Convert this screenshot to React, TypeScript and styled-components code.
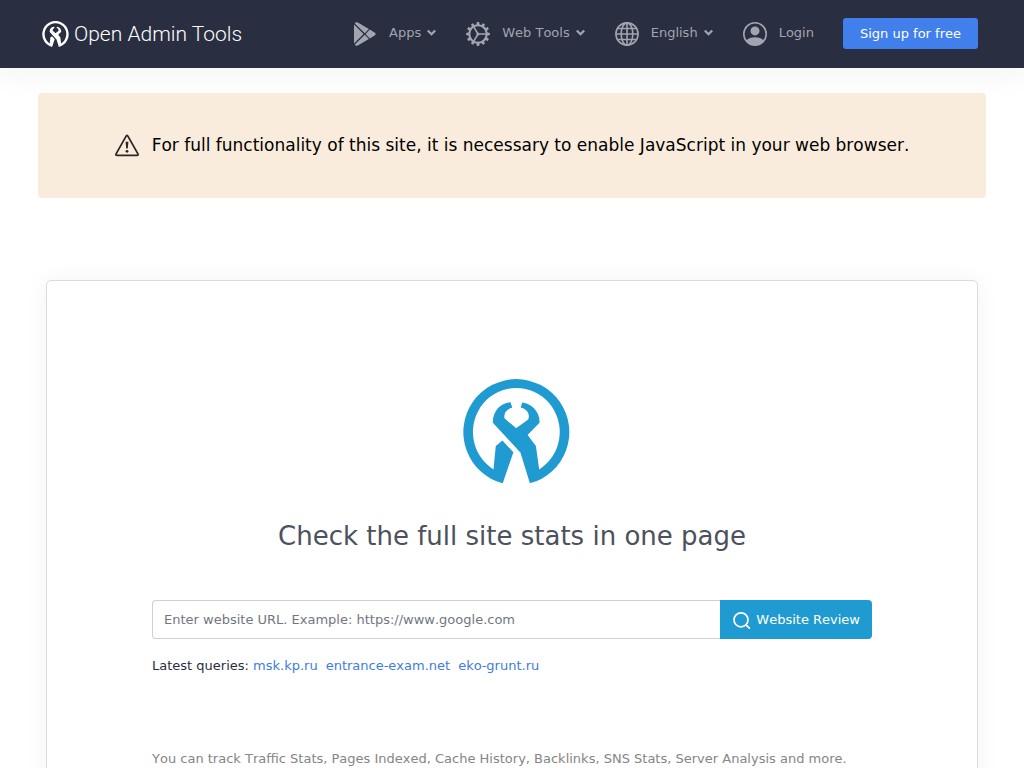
import React from 'react';
import styled, { createGlobalStyle } from 'styled-components';

const GlobalStyle = createGlobalStyle`
  *, *::before, *::after { box-sizing: border-box; }
  body {
    margin: 0;
    background: #fff;
    color: #292e40;
    font-family: "DejaVu Sans", sans-serif;
    font-size: 13px;
    font-kerning: none;
    line-height: 20px;
  }
  a { color: #3e7ddb; text-decoration: none; }
`;

const Header = styled.header`
  display: flex;
  align-items: center;
  justify-content: space-between;
  height: 68px;
  padding: 0 46px 0 42px;
  background: #292e40;
  box-shadow: 0 8px 30px rgba(41, 46, 64, 0.05);
`;

const Brand = styled.a`
  display: flex;
  align-items: center;
  gap: 5px;
  && { color: #fff; }
  font: 300 21px/28px Roboto, sans-serif;
  white-space: nowrap;
`;

const Nav = styled.nav`
  display: flex;
  align-items: center;
  gap: 30px;
`;

const NavLink = styled.a`
  display: flex;
  align-items: center;
  gap: 12px;
  && { color: #a2a5b0; }
  white-space: nowrap;
`;

const NavLabel = styled.span`
  display: flex;
  align-items: center;
  gap: 6px;
  padding-bottom: 2px;
`;

const SignUp = styled.button`
  height: 31px;
  margin: 0 0 1px -1px;
  padding: 0 17px;
  border: 0;
  border-radius: 3px;
  background: #407fec;
  color: #fff;
  font: inherit;
  white-space: nowrap;
`;

const Alert = styled.div`
  display: flex;
  align-items: center;
  justify-content: center;
  gap: 13px;
  min-height: 105px;
  margin: 25px 38px 82px;
  padding: 23px 24px 25px;
  border-radius: 4px;
  background: #faecdc;
  color: #000;
  font-size: 17px;
  line-height: 26px;
`;

const Card = styled.main`
  margin: 0 46px 46px;
  padding: 98px 24px 60px;
  border: 1px solid #d9dbde;
  border-radius: 5px;
  box-shadow: 0 0 24px rgba(41, 46, 64, 0.05);
`;

const Content = styled.div`
  max-width: 720px;
  margin: 0 auto;
`;

const HeroLogo = styled.div`
  display: flex;
  justify-content: center;
  padding-left: 9px;
  color: #209bd1;
`;

const Title = styled.h1`
  margin: 32px 0 44px;
  color: #4c515d;
  font-size: 26px;
  font-weight: 400;
  line-height: 40px;
  text-align: center;
`;

const SearchForm = styled.form`
  display: flex;
  height: 39px;
`;

const UrlInput = styled.input`
  flex: 1;
  min-width: 0;
  padding: 0 11px;
  border: 1px solid #ced0d4;
  border-right: 0;
  border-radius: 4px 0 0 4px;
  background: #fff;
  color: #292e40;
  font: inherit;
  font-kerning: none;
  &::placeholder { color: #717780; opacity: 1; }
`;

const SearchButton = styled.button`
  display: flex;
  align-items: center;
  gap: 5px;
  padding: 0 12px;
  border: 0;
  border-radius: 0 4px 4px 0;
  background: #209bd1;
  color: #fff;
  font: inherit;
  font-kerning: none;
  white-space: nowrap;
`;

const Queries = styled.p`
  display: flex;
  flex-wrap: wrap;
  gap: 0 8px;
  margin: 17px 0 73px;
`;

const Note = styled.p`
  margin: 0;
  color: #858585;
`;

const ToolsLogo = ({ width, height }: { width: number; height: number }) => (
  <svg width={width} height={height} viewBox="24 26 323 315" fill="currentColor" aria-hidden="true">
    <path d="M144 340A160 160 0 1 1 226 340L197 246L118 157C116 125 138 100 167 96L172 111C155 116 145 128 149 144L184 174L221 147C227 130 217 116 198 111L203 96C234 100 257 127 255 157L219 194L244 227L254 298A131 133 0 1 0 116 298L123 227L143 211L176 246Z" />
    <path d="M114 157C114 120 138 98 167 96L172 111C155 116 145 128 149 144L184 174L219 194L197 246Z" />
  </svg>
);

const Chevron = () => (
  <svg width="9" height="8" viewBox="0 0 9 8" fill="none" stroke="currentColor" strokeWidth="2.3" aria-hidden="true">
    <path d="M.8 1.5L4.5 5.2L8.2 1.5" />
  </svg>
);

const AppsIcon = () => (
  <svg width="24" height="24" viewBox="0 0 24 24" fill="currentColor" aria-hidden="true">
    <path d="M1 2.5L10.6 12L1 21.5ZM1.8 1.4Q2.6-.4 4.8.5L15.9 7L11.8 11.2ZM16.8 7.6L21.6 10.5Q23.8 12 21.6 13.5L16.8 16.4L12.6 12ZM11.8 12.8L15.9 17L4.8 23.5Q2.6 24.4 1.8 22.6Z" />
  </svg>
);

const gearTeeth = Array.from({ length: 12 }, (_, i) => i * 30);

const GearIcon = () => (
  <svg width="24" height="24" viewBox="0 0 24 24" fill="none" stroke="currentColor" strokeWidth="2.1" aria-hidden="true">
    <circle cx="12" cy="12" r="8.7" />
    {gearTeeth.map((angle) => (
      <path key={angle} d="M10.2 3.4L10.9.1H13.1L13.8 3.4Z" fill="currentColor" stroke="none" transform={`rotate(${angle} 12 12)`} />
    ))}
    <path d="M12 12H20.5M12 12L7.8 4.8M12 12L7.8 19.2" strokeWidth="1.6" />
    <circle cx="12" cy="12" r="1.5" fill="currentColor" stroke="none" />
  </svg>
);

const GlobeIcon = () => (
  <svg width="24" height="24" viewBox="0 0 24 24" fill="none" stroke="currentColor" strokeWidth="1.6" aria-hidden="true">
    <circle cx="12" cy="12" r="11.1" />
    <ellipse cx="12" cy="12" rx="5.8" ry="11.1" />
    <path d="M12 .9V23.1M.9 12H23.1M2.5 6.5H21.5M2.5 17.5H21.5" />
  </svg>
);

const UserIcon = () => (
  <svg width="24" height="24" viewBox="0 0 24 24" aria-hidden="true">
    <circle cx="12" cy="12" r="11.2" fill="none" stroke="currentColor" strokeWidth="1.6" />
    <circle cx="12" cy="8.9" r="4.5" fill="currentColor" />
    <path d="M3.3 18.5C6.2 14 17.8 14 20.7 18.5C16.5 25 7.5 25 3.3 18.5Z" fill="currentColor" />
  </svg>
);

const WarningIcon = () => (
  <svg width="24" height="24" viewBox="0 0 24 24" fill="none" stroke="#2b2724" strokeWidth="1.6" strokeLinejoin="round" aria-hidden="true">
    <path d="M11.2 3Q12 1.8 12.8 3L23 21Q23.6 22.4 22 22.4H2Q.4 22.4 1 21Z" />
    <path d="M10.6 8.7H13.4L12.8 15.6H11.2Z" fill="#2b2724" stroke="none" />
    <circle cx="12" cy="18.3" r="1.4" fill="#2b2724" stroke="none" />
  </svg>
);

const SearchIcon = () => (
  <svg width="19" height="18" viewBox="0 0 19 18" fill="none" stroke="currentColor" strokeWidth="1.7" strokeLinecap="round" aria-hidden="true">
    <circle cx="9" cy="8.8" r="7" />
    <path d="M13.9 13.9L17.4 17.2" />
  </svg>
);

const menu = [
  { label: 'Apps', Icon: AppsIcon, dropdown: true },
  { label: 'Web Tools', Icon: GearIcon, dropdown: true },
  { label: 'English', Icon: GlobeIcon, dropdown: true },
  { label: 'Login', Icon: UserIcon, dropdown: false },
];

const latest = ['msk.kp.ru', 'entrance-exam.net', 'eko-grunt.ru'];

export default function App() {
  return (
    <>
      <GlobalStyle />
      <Header>
        <Brand href="#">
          <ToolsLogo width={27} height={26} />
          Open Admin Tools
        </Brand>
        <Nav>
          {menu.map(({ label, Icon, dropdown }) => (
            <NavLink key={label} href="#">
              <Icon />
              <NavLabel>
                {label}
                {dropdown && <Chevron />}
              </NavLabel>
            </NavLink>
          ))}
          <SignUp type="button">Sign up for free</SignUp>
        </Nav>
      </Header>
      <Alert role="alert">
        <WarningIcon />
        <span>For full functionality of this site, it is necessary to enable JavaScript in your web browser.</span>
      </Alert>
      <Card>
        <Content>
          <HeroLogo>
            <ToolsLogo width={107} height={105} />
          </HeroLogo>
          <Title>Check the full site stats in one page</Title>
          <SearchForm onSubmit={(event) => event.preventDefault()}>
            <UrlInput type="text" aria-label="Website URL" placeholder="Enter website URL. Example: https://www.google.com" />
            <SearchButton type="submit">
              <SearchIcon />
              Website Review
            </SearchButton>
          </SearchForm>
          <Queries>
            <span>
              Latest queries: <a href="#">{latest[0]}</a>
            </span>
            {latest.slice(1).map((site) => (
              <a key={site} href="#">{site}</a>
            ))}
          </Queries>
          <Note>You can track Traffic Stats, Pages Indexed, Cache History, Backlinks, SNS Stats, Server Analysis and more.</Note>
        </Content>
      </Card>
    </>
  );
}
